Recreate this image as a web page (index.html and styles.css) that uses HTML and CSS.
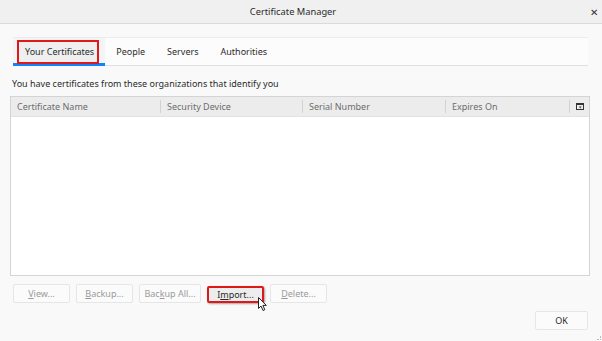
FILE: index.html
```html
<!DOCTYPE html>
<html lang="en">

<head>
    <meta charset="UTF-8">
    <title>Certificate Manager</title>
    <link rel="stylesheet" href="styles.css">
</head>

<body>

    <div class="titlebar">
        <span class="title">Certificate Manager</span>
        <span class="close">&#x2715;</span>
    </div>

    <div class="dialog">
        <div class="tabs">
            <div class="tab selected"><span class="mark">Your Certificates</span></div>
            <div class="tab">People</div>
            <div class="tab">Servers</div>
            <div class="tab">Authorities</div>
        </div>

        <p class="intro">You have certificates from these organizations that identify you</p>

        <div class="tree">
            <div class="tree-head">
                <div class="col c1">Certificate Name</div>
                <div class="col c2">Security Device</div>
                <div class="col c3">Serial Number</div>
                <div class="col c4">Expires On</div>
                <div class="col picker">
                    <svg width="8" height="7" viewBox="0 0 8 7">
                        <rect x="0.5" y="0.5" width="7" height="6" fill="none" stroke="#333" stroke-width="1"/>
                        <rect x="0" y="0" width="8" height="2" fill="#333"/>
                        <path d="M3 3.5 L5.5 3.5 L4.25 5.5 Z" fill="#333"/>
                    </svg>
                </div>
            </div>
            <div class="tree-body"></div>
        </div>

        <div class="actions">
            <button class="btn" disabled><u>V</u>iew...</button>
            <button class="btn" disabled><u>B</u>ackup...</button>
            <button class="btn wide" disabled>Bac<u>k</u>up All...</button>
            <button class="btn import">I<u>m</u>port...
                <svg class="cursor" width="10" height="15" viewBox="0 0 10 15">
                    <path d="M0.5 0.5 L0.5 11.5 L3 9 L5 13.5 L6.8 12.7 L4.9 8.4 L8.3 8.4 Z" fill="#fff" stroke="#222" stroke-width="1" stroke-linejoin="round"/>
                </svg>
            </button>
            <button class="btn" disabled><u>D</u>elete...</button>
        </div>

        <div class="footer">
            <button class="btn ok">OK</button>
        </div>
    </div>

    <div class="grip"></div>

</body>

</html>
```

FILE: styles.css
```css
body {
    font-family: "Noto Sans", "Open Sans", sans-serif;
    font-size: 9px;
    margin: 0;
    padding: 0;
    width: 602px;
    height: 341px;
    background-color: #f9f9f9;
    color: #222426;
    overflow: hidden;
    position: relative;
}

.titlebar {
    height: 23px;
    background-color: #f0f0f0;
    border-bottom: 1px solid #dadada;
    display: flex;
    align-items: center;
    justify-content: center;
    position: relative;
}

.title {
    font-size: 9.3px;
    color: #2b2b2b;
    margin-left: -16px;
}

.close {
    position: absolute;
    right: 4px;
    top: 5px;
    font-size: 10px;
    color: #333;
}

.dialog {
    padding: 13px 12px 0 10px;
}

.tabs {
    display: flex;
    height: 27px;
    margin-left: 3px;
    margin-right: 2px;
    background-color: #fcfcfc;
    border-top: 1px solid #ececec;
    border-bottom: 1px solid #e0e0e0;
}

.tab {
    display: flex;
    align-items: center;
    padding: 0 11px;
    color: #2b2b2b;
}

.tab.selected {
    padding: 0 6px 0 4px;
    border-bottom: 3px solid #0a84ff;
    margin-bottom: -1px;
    background-color: #f4f4f4;
}

.mark {
    border: 2px solid #e01818;
    padding: 3px 3px 4px 6px;
    margin-top: 2px;
    background-color: #efefef;
}

.intro {
    margin: 11px 0 0 2px;
    height: 19px;
    line-height: 14px;
    color: #2b2b2b;
}

.tree {
    border: 1px solid #d4d4d4;
    background-color: #fff;
    height: 178px;
    display: flex;
    flex-direction: column;
}

.tree-head {
    display: flex;
    height: 19px;
    background-color: #ececec;
    border-bottom: 1px solid #e2e2e2;
    color: #6d6d6d;
}

.col {
    display: flex;
    align-items: center;
    padding-left: 6px;
    border-right: 1px solid #d2d2d2;
    margin: 3px 0;
}

.c1 { width: 143px; }
.c2 { width: 135px; }
.c3 { width: 136px; }
.c4 { width: 117px; }

.picker {
    border-right: none;
    padding-left: 6px;
}

.tree-body {
    flex: 1;
}

.actions {
    display: flex;
    gap: 6px;
    margin-top: 8px;
    padding-left: 3px;
}

.btn {
    font-family: "Noto Sans", "Open Sans", sans-serif;
    font-size: 9px;
    height: 19px;
    width: 57px;
    padding: 0;
    background-color: #fbfbfb;
    border: 1px solid #e6e6e6;
    border-radius: 2px;
    color: #2b2b2b;
}

.btn:disabled {
    color: #9a9a9a;
}

.btn.wide {
    width: 62px;
}

.import {
    position: relative;
    height: 17px;
    margin-top: 2px;
    border: 2px solid #e01818;
    background-color: #ededed;
    box-shadow: 1px 1px 2px rgba(0, 0, 0, 0.35);
}

.cursor {
    position: absolute;
    left: 49px;
    top: 9px;
}

.footer {
    display: flex;
    justify-content: flex-end;
    margin-top: 8px;
}

.ok {
    width: 53px;
    height: 19px;
    margin-right: 2px;
}

.grip {
    position: absolute;
    right: 1px;
    bottom: 1px;
    width: 3px;
    height: 3px;
    border-right: 1px dotted #bbb;
    border-bottom: 1px dotted #bbb;
}
```
